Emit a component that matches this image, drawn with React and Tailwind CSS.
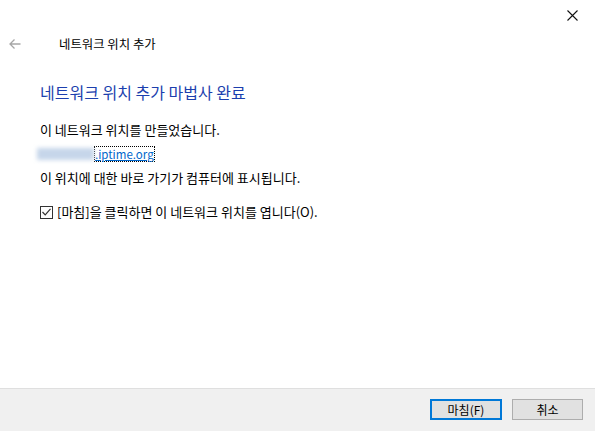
export default function App() {
  return (
    <div
      className="flex h-[431px] w-[595px] flex-col bg-white text-[12px] text-black"
      style={{ fontFamily: '"Noto Sans CJK KR", "Noto Sans", sans-serif' }}
    >
      <div className="flex h-[30px] justify-end">
        <div className="flex w-[46px] items-center justify-center">
          <svg width="11" height="11" viewBox="0 0 11 11" fill="none" stroke="#111" strokeWidth="1.1">
            <path d="M0.5 0.5 10.5 10.5M10.5 0.5 0.5 10.5" />
          </svg>
        </div>
      </div>

      <div className="flex h-[28px] items-center">
        <div className="flex w-[59px] items-center pl-[9px]">
          <svg width="12" height="10" viewBox="0 0 12 10" fill="none" stroke="#a6a6a6" strokeWidth="1.3">
            <path d="M11.5 5H1M5.5 0.5 1 5l4.5 4.5" />
          </svg>
        </div>
        <span className="text-[12.4px] leading-[16px]">네트워크 위치 추가</span>
      </div>

      <div className="flex-1 pl-[40px] text-[13px]">
        <h1 className="mt-[24px] text-[16px] leading-[20px] text-[#1c3fae]">네트워크 위치 추가 마법사 완료</h1>
        <p className="mt-[20px] leading-[16px]">이 네트워크 위치를 만들었습니다.</p>
        <div className="mt-[8px] -ml-[3px] flex h-[16px] items-center">
          <span className="h-[12px] w-[57px] bg-[#c6d6ea] blur-[2px]" />
          <span className="border border-dotted border-black text-[11.5px] leading-[14px] text-[#0066cc] underline">.iptime.org</span>
        </div>
        <p className="mt-[8px] leading-[16px]">이 위치에 대한 바로 가기가 컴퓨터에 표시됩니다.</p>
        <div className="mt-[18px] flex h-[16px] items-center">
          <span className="flex h-[13px] w-[13px] items-center justify-center border border-[#333] bg-white">
            <svg width="9" height="8" viewBox="0 0 9 8" fill="none" stroke="#333" strokeWidth="1.2">
              <path d="M0.5 4 3.2 6.8 8.5 0.8" />
            </svg>
          </span>
          <span className="ml-[4px] leading-[16px]">[마침]을 클릭하면 이 네트워크 위치를 엽니다(O).</span>
        </div>
      </div>

      <div className="flex h-[43px] items-start justify-end gap-[10px] border-t border-[#dfdfdf] bg-[#f0f0f0] pr-[12px] pt-[10px]">
        <button className="flex h-[21px] w-[72px] items-center justify-center border-2 border-[#0078d7] bg-[#e1e1e1] leading-none">
          마침(F)
        </button>
        <button className="flex h-[21px] w-[71px] items-center justify-center border border-[#adadad] bg-[#e1e1e1] leading-none">
          취소
        </button>
      </div>
    </div>
  );
}
